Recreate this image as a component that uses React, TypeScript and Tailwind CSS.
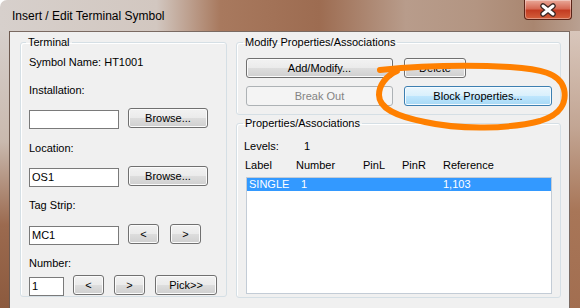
import React from "react";

const FONT = "font-['Liberation_Sans',Arial,sans-serif]";

function Btn({
  children,
  w,
  variant = "normal",
}: {
  children: React.ReactNode;
  w: string;
  variant?: "normal" | "disabled" | "default";
}) {
  const base = `${w} h-[20px] rounded-[3px] border flex items-center justify-center text-[11px] leading-none`;
  if (variant === "disabled")
    return <div className={`${base} border-[#adb2b5] bg-[#f4f4f4] text-[#838383]`}>{children}</div>;
  if (variant === "default")
    return (
      <div
        className={`${base} border-[#3c7fb1] text-black shadow-[inset_0_0_0_1px_#f4fbff] bg-[linear-gradient(to_bottom,#eaf6fd_0%,#d9f0fc_48%,#bee6fd_52%,#a7d9f5_100%)]`}
      >
        {children}
      </div>
    );
  return (
    <div
      className={`${base} border-[#707070] text-black shadow-[inset_0_0_0_1px_#fbfbfb] bg-[linear-gradient(to_bottom,#f2f2f2_0%,#ebebeb_48%,#dddddd_52%,#cfcfcf_100%)]`}
    >
      {children}
    </div>
  );
}

function TextBox({ value, w }: { value: string; w: string }) {
  return (
    <div className={`${w} h-[19px] mt-[2px] border border-[#7a7a7a] bg-white pl-[2px] flex items-center text-[11px] text-black`}>
      {value}
    </div>
  );
}

function Group({
  title,
  className,
  children,
}: {
  title: string;
  className: string;
  children: React.ReactNode;
}) {
  return (
    <fieldset className={`border border-[#d5dfe5] rounded-[3px] shadow-[inset_1px_1px_0_#ffffff] ${className}`}>
      <legend className="ml-[-3px] px-[2px] text-[11px] leading-[15px] text-black">{title}</legend>
      {children}
    </fieldset>
  );
}

function Label({ children, className = "" }: { children: React.ReactNode; className?: string }) {
  return <div className={`h-[16px] leading-[16px] text-[11px] text-black ${className}`}>{children}</div>;
}

export default function App() {
  return (
    <div className={`relative w-[580px] h-[308px] overflow-hidden rounded-tl-[7px] ${FONT} bg-[linear-gradient(to_right,#d7d0cc_0%,#d2c7c0_27%,#a8795e_38%,#9d6c51_55%,#b89c8b_70%,#b39582_82%,#a98670_92%,#b9a091_100%)]`}>
      {/* title bar */}
      <div className="h-[31px] flex items-start">
        <div className="pl-[12px] pt-[9px] text-[12px] leading-[15px] text-black">Insert / Edit Terminal Symbol</div>
        <div className="ml-auto mr-[8px] w-[48px] h-[20px] rounded-b-[4px] border border-t-0 border-[#5a2418] shadow-[inset_0_0_0_1px_rgba(255,255,255,0.35)] bg-[linear-gradient(to_bottom,#e9a999_0%,#d66a55_45%,#c33c22_55%,#d4603c_100%)] flex items-center justify-center">
          <svg width="18" height="14" viewBox="0 0 18 14">
            <path d="M4 3 L14 11 M14 3 L4 11" stroke="#3a2622" strokeWidth="5.5" strokeLinecap="round" />
            <path d="M4 3 L14 11 M14 3 L4 11" stroke="#ffffff" strokeWidth="3" strokeLinecap="round" />
          </svg>
        </div>
      </div>

      {/* body */}
      <div className="flex h-[277px]">
        <div className="w-[10px] bg-[linear-gradient(to_bottom,#d6cfcb_0%,#c9b9ae_40%,#9b6a4f_70%,#8c5a3e_100%)] border-r border-[#6d5a50]" />
        <div className="w-[560px] bg-[#f0f0f0] border-t border-r border-[#7a6a62] flex pl-[10px] pt-[3px]">
          {/* Terminal */}
          <Group title="Terminal" className="w-[207px] h-[262px] pl-[8px] pr-[9px] pb-[4px]">
            <Label className="mt-[4px]">Symbol Name: HT1001</Label>
            <Label className="mt-[12px]">Installation:</Label>
            <div className="mt-[10px] flex items-start gap-[9px]">
              <TextBox value="" w="w-[90px]" />
              <Btn w="w-[80px]">Browse...</Btn>
            </div>
            <Label className="mt-[11px]">Location:</Label>
            <div className="mt-[10px] flex items-start gap-[9px]">
              <TextBox value="OS1" w="w-[90px]" />
              <Btn w="w-[80px]">Browse...</Btn>
            </div>
            <Label className="mt-[10px]">Tag Strip:</Label>
            <div className="mt-[11px] flex items-start">
              <TextBox value="MC1" w="w-[90px]" />
              <div className="ml-[9px]">
                <Btn w="w-[31px]">&lt;</Btn>
              </div>
              <div className="ml-[11px]">
                <Btn w="w-[31px]">&gt;</Btn>
              </div>
            </div>
            <Label className="mt-[10px]">Number:</Label>
            <div className="mt-[4px] flex items-start">
              <TextBox value="1" w="w-[35px]" />
              <div className="ml-[9px]">
                <Btn w="w-[31px]">&lt;</Btn>
              </div>
              <div className="ml-[10px]">
                <Btn w="w-[31px]">&gt;</Btn>
              </div>
              <div className="ml-[10px]">
                <Btn w="w-[62px]">Pick&gt;&gt;</Btn>
              </div>
            </div>
          </Group>

          <div className="ml-[9px] w-[325px] flex flex-col">
            <Group title="Modify Properties/Associations" className="pl-[9px] pr-[8px] pb-[8px]">
              <div className="mt-[8px] flex gap-[11px]">
                <Btn w="w-[147px]">Add/Modify...</Btn>
                <Btn w="w-[62px]">Delete</Btn>
              </div>
              <div className="mt-[8px] flex gap-[11px]">
                <Btn w="w-[147px]" variant="disabled">Break Out</Btn>
                <Btn w="w-[148px]" variant="default">Block Properties...</Btn>
              </div>
            </Group>

            <Group title="Properties/Associations" className="mt-[1px] pl-[9px] pr-[8px] pb-[3px]">
              <Label className="mt-[7px] flex">
                <span className="w-[60px] -ml-[2px]">Levels:</span>
                <span>1</span>
              </Label>
              <Label className="mt-[3px] flex">
                <span className="w-[51px] -ml-[1px]">Label</span>
                <span className="w-[67px]">Number</span>
                <span className="w-[39px]">PinL</span>
                <span className="w-[41px]">PinR</span>
                <span>Reference</span>
              </Label>
              <div className="mt-[4px] h-[117px] border border-[#c3ccd6] bg-white">
                <div className="h-[13px] bg-[#3399ff] text-white text-[11px] leading-[13px] flex">
                  <span className="w-[54px] pl-[2px]">SINGLE</span>
                  <span className="w-[142px]">1</span>
                  <span>1,103</span>
                </div>
              </div>
            </Group>
          </div>
        </div>
        <div className="w-[10px] bg-[linear-gradient(to_bottom,#d8c6bb_0%,#c2a593_35%,#a87658_65%,#a26e50_100%)]" />
      </div>

      {/* hand-drawn annotation */}
      <svg className="absolute inset-0 pointer-events-none" width="580" height="308" viewBox="0 0 580 308">
        <path
          d="M380 70 C 420 66, 470 65, 510 67 C 540 69, 560 73, 564 89 C 567 103, 560 115, 540 121 C 510 129, 460 130, 425 122 C 395 116, 379 108, 379 95 C 379 85, 386 76, 397 71"
          fill="none"
          stroke="#ff8000"
          strokeWidth="6"
          strokeLinecap="round"
          strokeLinejoin="round"
        />
      </svg>
    </div>
  );
}
